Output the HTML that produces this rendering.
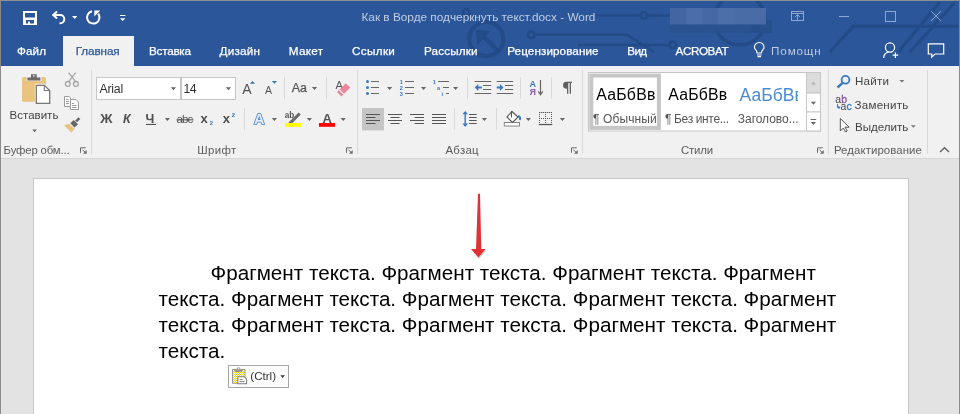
<!DOCTYPE html>
<html><head><meta charset="utf-8">
<style>
html,body{margin:0;padding:0;width:960px;height:414px;overflow:hidden;background:#e3e3e3;font-family:"Liberation Sans",sans-serif}
.a{position:absolute}
#title{left:0;top:0;width:960px;height:66px;background:#2b579a}
#ribbon{left:0;top:66px;width:960px;height:92px;background:#f1f1f1}
#rline{left:0;top:158px;width:960px;height:1px;background:#d6d6d6}
#page{left:33px;top:178px;width:874px;height:300px;background:#fff;border:1px solid #c6c6c6}
#bl{left:0;top:0;width:1px;height:414px;background:#8a8a8a}
#br{left:959px;top:0;width:1px;height:414px;background:#8a8a8a}
#bt{left:0;top:0;width:960px;height:1px;background:#8f8f8f}
svg{position:absolute;left:0;top:0;will-change:transform}
</style></head><body>
<div class="a" id="title"></div>
<div class="a" id="ribbon"></div>
<div class="a" id="rline"></div>
<div class="a" id="page"></div>
<svg width="960" height="414" viewBox="0 0 960 414" font-family="Liberation Sans">
<!-- circuit decoration -->
<g fill="none" stroke="#234b88" stroke-width="3">
  <circle cx="486.2" cy="39" r="17" stroke-width="4"/>
  <path d="M497 50 L481 34" stroke-width="4.5"/>
  <path d="M476.5 30.5 L489.5 31.5 L477.5 44.5 Z" fill="#234b88" stroke-width="1"/>
  <circle cx="466.3" cy="12.5" r="3.2" stroke-width="2.5"/>
  <circle cx="531.3" cy="34.7" r="3.3" stroke-width="2.5"/>
  <path d="M534.6 34.7 H627 L654 52" stroke-width="2.5"/>
  <path d="M578 45 H640" stroke-width="2.5"/>
  <path d="M596 15.6 H640.5" stroke-width="2.5"/>
  <circle cx="643.8" cy="15.6" r="3.3" stroke-width="2.5"/>
  <path d="M647 15.6 H670" stroke-width="2.5"/>
  <path d="M640 45 H669.7" stroke-width="2.5"/>
  <circle cx="673" cy="44.8" r="3.3" stroke-width="2.5"/>
  <circle cx="739.6" cy="19.5" r="25.5" stroke-width="3.6"/>
  <path d="M830 52 L853.3 26.3 H960" stroke-width="3.2"/>
  <path d="M898.3 52 L940 2" stroke-width="3.2"/>
  <path d="M910 52 L955 2" stroke-width="3.2"/>
</g>
<!-- title bar -->
<rect x="670" y="24" width="102" height="9" fill="#29538f" opacity="0.9"/>
<rect x="750" y="20" width="22" height="13" fill="#26508c"/>
<rect x="670" y="8" width="16" height="16.5" fill="#4266a2"/>
<rect x="686" y="8" width="16" height="16.5" fill="#4a6ea9"/>
<rect x="702" y="8" width="16" height="16.5" fill="#4569a5"/>
<rect x="718" y="8" width="16" height="16.5" fill="#4b6fa9"/>
<rect x="734" y="8" width="32" height="16.5" fill="#496ba6"/>
<text x="361.5" y="20.6" font-size="11.8" fill="#c0cde2">Как в Ворде подчеркнуть текст.docx - Word</text>
<!-- QAT icons -->
<g fill="#fff">
  <path d="M23 11 h14 v14 h-14 z M25 13 v4.5 h10 v-4.5 z M26 20 v3.6 h2 v-2 h2 v2 h4 v-3.6 z" fill-rule="evenodd"/>
  <path d="M72 16 h5.3 l-2.65 3 z"/>
  <path d="M120 15 h5.4 v1 h-5.4 z M120 18.3 h5.4 l-2.7 2.8 z"/>
</g>
<g fill="none" stroke="#fff" stroke-width="2">
  <path d="M57 11.6 L53.2 15.1 L57 18.6"/>
  <path d="M53.5 15.1 H60.2 A4.1 4.1 0 0 1 60.2 23.3 H59.5"/>
  <path d="M92 11.3 A6.2 6.2 0 1 0 98.2 13.6"/>
</g>
<path d="M94.3 10.6 h5.9 l-5.9 5.8 z" fill="#fff"/>
<!-- window controls -->
<g fill="none" stroke="#8ea7cc" stroke-width="1">
  <rect x="791.5" y="11.5" width="12" height="9"/>
  <path d="M791.5 13.5 h12 M797.5 20.5 v-5.5 M795 17 l2.5 -2.5 l2.5 2.5"/>
  <path d="M839 16.5 h10"/>
  <rect x="885.5" y="11.5" width="10" height="10"/>
  <path d="M931 11 L941 21 M941 11 L931 21"/>
</g>
<!-- tabs -->
<rect x="63" y="36" width="71" height="30" fill="#f1f1f1"/>
<g font-size="11.7" fill="#fff" stroke="#fff" stroke-width="0.25">
<text x="17" y="54.8" textLength="29">Файл</text>
<text x="75.7" y="54.8" fill="#2b579a" stroke="#2b579a" textLength="44">Главная</text>
<text x="149" y="54.8" textLength="42">Вставка</text>
<text x="219.6" y="54.8" textLength="40.4">Дизайн</text>
<text x="288.8" y="54.8" textLength="34.2">Макет</text>
<text x="351.9" y="54.8" textLength="43">Ссылки</text>
<text x="424" y="54.8" textLength="53.5">Рассылки</text>
<text x="507.2" y="54.8" textLength="91.4">Рецензирование</text>
<text x="627.3" y="54.8" textLength="19.8">Вид</text>
<text x="675.6" y="54.8" textLength="53">ACROBAT</text>
<text x="771.1" y="55" fill="#bccbe2" stroke="none" textLength="49.6">Помощн</text>
</g>
<!-- lightbulb -->
<g fill="none" stroke="#fff" stroke-width="1.1">
  <path d="M757 53 C757 50 754.5 49 754.5 48 A4.8 4.8 0 1 1 764 48 C764 49 761.5 50 761.5 53 Z"/>
  <path d="M757 55 h4.5 M757.5 56.6 h3.5"/>
</g>
<!-- person add -->
<g fill="none" stroke="#fff" stroke-width="1.2">
  <circle cx="890" cy="47.5" r="4.6"/>
  <path d="M883.6 58 C884 54 886.5 52.5 888.5 52.2"/>
  <path d="M895.4 52.5 v5.5 M892.6 55.2 h5.6"/>
  <path d="M928.3 43.8 h15.4 v10.2 h-8.7 l-3.3 3.2 v-3.2 h-3.4 z"/>
</g>
<!-- group separators -->
<g fill="#dadada">
  <rect x="91" y="70" width="1" height="84"/>
  <rect x="357" y="70" width="1" height="84"/>
  <rect x="582" y="70" width="1" height="84"/>
  <rect x="828" y="70" width="1" height="84"/>
  <rect x="927" y="70" width="1" height="84"/>
  <rect x="284" y="77" width="1" height="22"/>
  <rect x="326" y="77" width="1" height="22"/>
  <rect x="244" y="108" width="1" height="22"/>
  <rect x="467" y="77" width="1" height="22"/>
  <rect x="520" y="77" width="1" height="22"/>
  <rect x="551" y="77" width="1" height="22"/>
  <rect x="454" y="108" width="1" height="22"/>
  <rect x="496" y="108" width="1" height="22"/>
</g>
<!-- group labels -->
<g font-size="11.4" fill="#5c5c5c">
<text x="3.6" y="153.5" textLength="66">Буфер обм...</text>
<text x="197.2" y="153.6" textLength="39">Шрифт</text>
<text x="445.5" y="153.6" textLength="33">Абзац</text>
<text x="681" y="153.6" textLength="32">Стили</text>
<text x="833.9" y="153.5" textLength="88">Редактирование</text>
</g>
<!-- launchers -->
<g fill="none" stroke="#777" stroke-width="1">
  <path d="M80.5 152.8 v-5 h5.3 M82.3 149.6 l3.2 3.2" stroke="#6a6a6a"/><path d="M86.7 150 v3.7 h-3.7 z" fill="#6a6a6a" stroke="none"/>
  <path d="M346.5 152.8 v-5 h5.3 M348.3 149.6 l3.2 3.2" stroke="#6a6a6a"/><path d="M352.7 150 v3.7 h-3.7 z" fill="#6a6a6a" stroke="none"/>
  <path d="M571.5 152.8 v-5 h5.3 M573.3 149.6 l3.2 3.2" stroke="#6a6a6a"/><path d="M577.7 150 v3.7 h-3.7 z" fill="#6a6a6a" stroke="none"/>
  <path d="M817.5 152.8 v-5 h5.3 M819.3 149.6 l3.2 3.2" stroke="#6a6a6a"/><path d="M823.7 150 v3.7 h-3.7 z" fill="#6a6a6a" stroke="none"/>

  <path d="M940 152 l4.5 -4.3 l4.5 4.3" stroke-width="1.5" stroke="#666"/>
</g>
<!-- clipboard group -->
<rect x="22" y="77" width="24" height="24.7" rx="1.5" fill="#e9c47e"/>
<rect x="26.5" y="74" width="15" height="7" fill="#f1f1f1"/>
<path d="M27.4 77.4 h13 v3 h-13 z M31 74.2 h5.7 v3.3 h-5.7 z" fill="#6b6b6b"/>
<rect x="33" y="75.2" width="1.6" height="1.4" fill="#f1f1f1"/>
<path d="M34.8 83.8 h10 l6.4 6.1 v15 h-16.4 z" fill="#f1f1f1"/>
<path d="M36.3 85.3 h8 l5.4 5.2 v12.9 h-13.4 z" fill="#fff" stroke="#777" stroke-width="1.3"/>
<path d="M44.3 85.3 v5.2 h5.4" fill="none" stroke="#777" stroke-width="1.1"/>
<text x="9.6" y="118.7" font-size="11.5" fill="#444" textLength="48.8">Вставить</text>
<path d="M32.3 129.6 h4.6 l-2.3 2.6 z" fill="#666"/>
<!-- scissors -->
<g fill="none" stroke="#a6a6a6" stroke-width="1.3">
  <path d="M68.6 72.6 L75.8 81.8 M75.7 72.6 L68.5 81.8"/>
  <circle cx="67.8" cy="83.9" r="2.4"/>
  <circle cx="75.9" cy="83.9" r="2.4"/>
</g>
<!-- copy -->
<g fill="#fff" stroke="#9a9a9a" stroke-width="1">
  <path d="M64.5 96.5 h4.5 l1.5 1.5 v8.5 h-6 z"/>
  <path d="M70.5 99.5 h5.5 l2.5 2.5 v7.5 h-8 z"/>
</g>
<g stroke="#9a9a9a" stroke-width="1">
  <path d="M66 99.5 h2.5 M66 101.5 h3 M66 103.5 h3 M72 103.5 h2 M72 105.5 h4.5 M72 107.5 h4.5"/>
</g>
<!-- format painter -->
<path d="M64 125.3 L68.7 123.8 L74.8 128.8 L71.3 132.8 Z" fill="#e9c47e"/>
<path d="M70.3 123.3 L73.7 119.9 L78 124.2 L74.6 127.6 Z" fill="#676767"/>
<path d="M75.2 120.5 L78.5 117.2 L80.3 119 L77 122.3 Z" fill="#676767"/>
<!-- font boxes -->
<rect x="96.5" y="77.5" width="84" height="22" fill="#fff" stroke="#c6c6c6"/>
<rect x="181.5" y="77.5" width="54" height="22" fill="#fff" stroke="#c6c6c6"/>
<text x="99.4" y="93.2" font-size="12.3" fill="#333" textLength="23.8">Arial</text>
<text x="183.6" y="93.2" font-size="12.3" fill="#333" textLength="13">14</text>
<g fill="#666">
  <path d="M170.8 87.3 h5.2 l-2.6 3 z"/>
  <path d="M225.8 87.3 h5.2 l-2.6 3 z"/>
  <path d="M164.8 118 h5.2 l-2.6 3 z"/>
  <path d="M311.9 87 h5.2 l-2.6 3 z"/>
  <path d="M271.8 118 h5.2 l-2.6 3 z"/>
  <path d="M306.8 118 h5.2 l-2.6 3 z"/>
  <path d="M340.6 118 h5.2 l-2.6 3 z"/>
  <path d="M387 87 h5.2 l-2.6 3 z"/>
  <path d="M421 87 h5.2 l-2.6 3 z"/>
  <path d="M453 87 h5.2 l-2.6 3 z"/>
  <path d="M481.8 118 h5.2 l-2.6 3 z"/>
  <path d="M525.8 118 h5.2 l-2.6 3 z"/>
  <path d="M559.8 118 h5.2 l-2.6 3 z"/>
</g>
<g fill="#505050" font-weight="bold">
  <text x="100.3" y="122.7" font-size="13.5" textLength="13.5">Ж</text>
  <text x="123" y="122.7" font-size="12.5" font-style="italic">К</text>
  <text x="145.5" y="122.7" font-size="12.5">Ч</text>
</g>
<rect x="146" y="123.9" width="10" height="1.1" fill="#505050"/>
<text x="176.5" y="122.8" font-size="11.5" fill="#555" textLength="16.8">abc</text>
<rect x="176.5" y="119.3" width="17" height="1.1" fill="#555"/>
<text x="200.6" y="122.8" font-size="13" font-weight="bold" fill="#4d4d4d">x</text>
<text x="209.7" y="125" font-size="5.8" font-weight="bold" fill="#2e75b6">2</text>
<text x="222.8" y="122.8" font-size="13" font-weight="bold" fill="#4d4d4d">x</text>
<text x="231.8" y="117" font-size="5.8" font-weight="bold" fill="#2e75b6">2</text>
<!-- grow/shrink -->
<text x="242.2" y="93.7" font-size="14" fill="#505050">A</text>
<path d="M249.9 83.8 h5.2 l-2.6 -2.9 z" fill="#2e75b6"/>
<text x="265" y="93.7" font-size="10.5" fill="#555">A</text>
<path d="M271.9 81.1 h5.1 l-2.55 2.7 z" fill="#2e75b6"/>
<text x="291.7" y="91.9" font-size="12.5" fill="#555" stroke="#555" stroke-width="0.25">Aa</text>
<!-- clear formatting -->
<text x="335.5" y="89.3" font-size="11" fill="#555">A</text>
<path d="M345.8 83.2 L350.2 87.6 L341.4 96.4 L337 92 Z" fill="#e8879b"/>
<path d="M339.2 89.8 L343.6 94.2" stroke="#f1f1f1" stroke-width="1.1"/>
<!-- text effects -->
<text x="254" y="124.4" font-size="14.5" font-weight="bold" fill="#e4eefa" stroke="#3f7dc6" stroke-width="1.5" paint-order="stroke" textLength="11.6">A</text>
<!-- highlight -->
<text x="284.8" y="118" font-size="8.2" font-weight="bold" fill="#555" font-family="Liberation Sans">ab</text>
<path d="M290 121 L298.6 112.4 L300.8 114.6 L292.2 123.2 Z" fill="#6a6a6a"/><path d="M288.5 122.5 L290 121 L292.2 123.2 Z" fill="#444"/>
<rect x="285" y="123" width="16" height="3.8" fill="#ffff00"/>
<!-- font color -->
<text x="322.6" y="122.6" font-size="13" font-weight="bold" fill="#555" textLength="9.6">A</text>
<rect x="319" y="123" width="16" height="3.8" fill="#ff0000"/>
<!-- bullets -->
<g fill="#3a78c2">
  <circle cx="367.5" cy="81.5" r="1.5"/><circle cx="367.5" cy="87.5" r="1.5"/><circle cx="367.5" cy="93.5" r="1.5"/>
</g>
<g stroke="#666" stroke-width="1.1">
  <path d="M371 81.5 h8 M371 87.5 h8 M371 93.5 h8"/>
  <path d="M405 81.5 h9 M405 87.5 h9 M405 93.5 h9"/>
  <path d="M438 81.5 h11 M443 87.5 h6 M446 93.5 h3"/>
</g>
<g font-size="5.6" font-weight="bold" fill="#3a78c2">
  <text x="399.7" y="83.8">1</text><text x="399.7" y="90">2</text><text x="399.7" y="96">3</text>
  <text x="432.8" y="83.8">1</text><text x="437" y="90">a</text><text x="441.4" y="96">i</text>
</g>
<!-- indent -->
<g stroke="#666" stroke-width="1.1">
  <path d="M474.7 81.5 h16.5 M483 85.5 h8.2 M483 89.5 h8.2 M474.7 93.5 h16.5"/>
  <path d="M496.7 81.5 h16.5 M505 85.5 h8.2 M505 89.5 h8.2 M496.7 93.5 h16.5"/>
</g>
<g fill="#3a78c2">
  <path d="M474.7 87.5 l3.6 -3.4 v2.5 h3.5 v1.8 h-3.5 v2.5 z"/>
  <path d="M503.5 87.5 l-3.6 -3.4 v2.5 h-3.2 v1.8 h3.2 v2.5 z"/>
</g>
<!-- sort -->
<text x="529.6" y="86.7" font-size="9" font-weight="bold" fill="#3a78c2">A</text>
<text x="529.6" y="94.8" font-size="9" font-weight="bold" fill="#8a55b0">Я</text>
<path d="M540.5 80 v14.5 M538.2 91.4 l2.3 3.4 l2.3 -3.4" fill="none" stroke="#666" stroke-width="1.2"/>
<!-- pilcrow -->
<path d="M567 81.8 h5 v1.2 h-1 v10.7 h-1.3 v-10.7 h-1.4 v10.7 h-1.3 v-5 h-0.5 a3.4 3.4 0 0 1 0 -6.9 z" fill="#606060"/>
<!-- align -->
<rect x="362" y="108" width="22" height="22.4" fill="#c5c5c5"/>
<g stroke="#555" stroke-width="1.2">
  <path d="M366 114.5 h14 M366 117.5 h9.4 M366 120.5 h14 M366 123.5 h9.4"/>
  <path d="M388 114.5 h14 M390.5 117.5 h9 M388 120.5 h14 M390.5 123.5 h9"/>
  <path d="M410 114.5 h14 M414.6 117.5 h9.4 M410 120.5 h14 M414.6 123.5 h9.4"/>
  <path d="M432 114.5 h14 M432 117.5 h14 M432 120.5 h14 M432 123.5 h14"/>
  <path d="M469.1 114.5 h7.6 M469.1 117.5 h7.6 M469.1 120.5 h7.6 M469.1 123.5 h7.6"/>
</g>
<path d="M465.2 113 v12" fill="none" stroke="#3a78c2" stroke-width="1.4"/><path d="M462.4 114.3 l2.8 -3.4 l2.8 3.4 z M462.4 123.6 l2.8 3.4 l2.8 -3.4 z" fill="#3a78c2"/>
<!-- shading -->
<rect x="504.3" y="122.5" width="15.2" height="3.5" fill="#fff" stroke="#888" stroke-width="1"/>
<path d="M512 111.5 L518 117 L512.5 122.5 L507 117 Z" fill="#fff" stroke="#555" stroke-width="1.1"/>
<path d="M511.5 111 v6.5" stroke="#555" stroke-width="1.1"/>
<path d="M518 116 q3 1 1.8 4" fill="none" stroke="#3a78c2" stroke-width="2"/>
<!-- borders -->
<g fill="#666">
  <path d="M539 112 h13 v1 h-13 z M539 124 h13 v1.2 h-13 z" opacity="0.35"/>
</g>
<g stroke="#555" stroke-width="1" stroke-dasharray="1 1">
  <path d="M539 112.5 h13 M539 118.5 h13 M539.5 112 v12 M545.5 112 v12 M551.5 112 v12"/>
</g>
<path d="M538.8 124.5 h13.5" stroke="#555" stroke-width="1.2"/>
<!-- styles gallery -->
<rect x="588.5" y="72.5" width="232" height="58.5" fill="#fff" stroke="#c6c6c6"/>
<rect x="591.3" y="75.6" width="67.6" height="52.3" fill="none" stroke="#c6c6c6" stroke-width="4"/>
<rect x="806.5" y="72.5" width="14" height="20.5" fill="#dcdcdc" stroke="#c6c6c6"/>
<rect x="806.5" y="93" width="14" height="19" fill="#fff" stroke="#c6c6c6"/>
<rect x="806.5" y="112" width="14" height="19" fill="#fff" stroke="#c6c6c6"/>
<path d="M810.8 84.4 h5.2 l-2.6 -3 z" fill="#b5b5b5"/>
<path d="M810.8 101.8 h5.2 l-2.6 3 z" fill="#666"/>
<path d="M810.6 119.5 h5.6" stroke="#666" stroke-width="1"/><path d="M810.8 122 h5.2 l-2.6 3 z" fill="#666"/>
<text x="596.3" y="99.5" font-size="15.8" fill="#000" textLength="59">АаБбВв</text>
<text x="668.2" y="99.5" font-size="15.8" fill="#000" textLength="59">АаБбВв</text>
<svg x="739" y="80" width="59" height="30" overflow="hidden"><text x="0.6" y="20.7" font-size="17.5" fill="#4b8bd3">АаБбВв</text></svg>
<g font-size="12" fill="#555">
<text x="593" y="122.6" textLength="63.8">¶ Обычный</text>
<text x="665" y="122.6" textLength="64">¶ Без инте...</text>
<text x="737.8" y="122.6" textLength="60.8">Заголово...</text>
</g>
<!-- editing -->
<g font-size="11.6" fill="#444">
<text x="855" y="85.3" textLength="34">Найти</text>
<text x="854.5" y="108.7" textLength="53.8">Заменить</text>
<text x="855" y="130.7" textLength="53.3">Выделить</text>
</g>
<path d="M899.4 80 h5 l-2.5 2.5 z M910.8 125.3 h5 l-2.5 2.5 z" fill="#777"/>
<circle cx="845.5" cy="79.8" r="3.9" fill="none" stroke="#3a78c2" stroke-width="1.8"/>
<path d="M842.6 82.8 L837.5 87.5" stroke="#3a78c2" stroke-width="2.4"/>
<text x="835.3" y="103.2" font-size="10.5" fill="#444">a</text>
<text x="841.2" y="103.2" font-size="10.5" fill="#8a55b0" style="stroke:#8a55b0;stroke-width:0.3">b</text>
<text x="840.5" y="110.3" font-size="10.5" fill="#444">a</text>
<text x="846.5" y="110.3" font-size="10.5" fill="#3a78c2" style="stroke:#3a78c2;stroke-width:0.3">c</text>
<path d="M837.5 104 v3.5 h2.5 M838.5 106 l1.3 1.5 l-1.3 1.5" fill="none" stroke="#3a78c2" stroke-width="1"/>
<path d="M840.3 118.5 v12.5 l3 -3 l2.3 4 l1.6 -1 l-2.2 -3.8 h4.2 z" fill="#fff" stroke="#555" stroke-width="1"/>
<!-- document text -->
<g font-size="20.65" fill="#000">
<text x="210.5" y="279.7">Фрагмент текста. Фрагмент текста. Фрагмент текста. Фрагмент</text>
<text x="158.5" y="305.7">текста. Фрагмент текста. Фрагмент текста. Фрагмент текста. Фрагмент</text>
<text x="158.5" y="331.7">текста. Фрагмент текста. Фрагмент текста. Фрагмент текста. Фрагмент</text>
<text x="158.5" y="358.2">текста.</text>
</g>
<!-- red arrow -->
<path d="M486.5 250 L479 258.8 L474 252 Z" fill="#c8c8c8"/>
<path d="M478 193.8 h2 L481.3 249 L485.5 249 L478.3 257.5 L471 249 L476 249 Z" fill="#e03232"/>
<!-- paste options -->
<rect x="228.5" y="365.5" width="60" height="22" fill="#fcfcfc" stroke="#a6a6a6"/>
<defs><pattern id="chk" x="0" y="0" width="2" height="2" patternUnits="userSpaceOnUse"><rect width="2" height="2" fill="#fff"/><rect width="1" height="1" fill="#f2d400"/><rect x="1" y="1" width="1" height="1" fill="#f2d400"/></pattern></defs>
<rect x="232.5" y="369.5" width="12.5" height="13.8" fill="url(#chk)" stroke="#9a9a9a" stroke-width="1"/>
<path d="M234.6 372 h7.8 v-2 l-1.2 -1.2 h-1.4 v-1.3 h-2.6 v1.3 h-1.4 l-1.2 1.2 z" fill="#9d9890"/><rect x="238" y="368.2" width="1.1" height="1.1" fill="#f4f4f4"/>
<path d="M237.8 376.7 h6.3 l2.5 2.5 v4.5 h-8.8 z" fill="#fff" stroke="#808080" stroke-width="1.1"/>
<path d="M239.5 379.5 h3 M239.5 381.5 h5" stroke="#808080" stroke-width="0.9"/>
<text x="250.3" y="380.2" font-size="11.6" fill="#333">(Ctrl)</text>
<path d="M280.4 375.2 h4.5 l-2.25 2.9 z" fill="#333"/>
</svg>
<div class="a" id="bt"></div>
<div class="a" id="bl"></div>
<div class="a" id="br"></div>
</body></html>
